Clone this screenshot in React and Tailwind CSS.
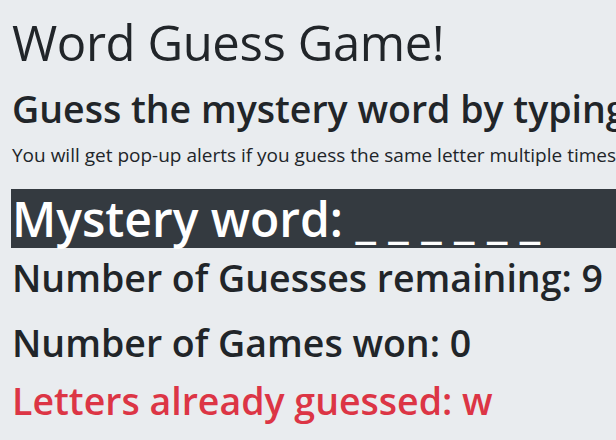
export default function App() {
  return (
    <div className="h-[440px] w-[616px] overflow-hidden bg-[#e9ecef] px-3 text-[#212529] font-['Open_Sans',sans-serif]">
      <div className="h-[85px] whitespace-nowrap text-[49px] font-normal leading-[85px] tracking-[-0.4px]">Word Guess Game!</div>
      <div className="h-[47px] whitespace-nowrap text-[37.5px] font-semibold leading-[47px]">Guess the mystery word by typing a letter!</div>
      <div className="h-[47px] whitespace-nowrap text-[19px] font-normal leading-[47px]">You will get pop-up alerts if you guess the same letter multiple times</div>
      <div className="mt-[10px] -ml-px -mr-3 h-[59px] whitespace-nowrap bg-[#343a40] pl-px text-[48px] font-semibold leading-[59px] text-white">Mystery word: _ _ _ _ _ _</div>
      <div className="h-[59px] whitespace-nowrap text-[37.5px] font-semibold leading-[59px]">Number of Guesses remaining: 9</div>
      <div className="h-[71px] whitespace-nowrap text-[37.5px] font-semibold leading-[71px]">Number of Games won: 0</div>
      <div className="h-[45px] whitespace-nowrap text-[37.5px] font-semibold leading-[45px] text-[#dc3545]">Letters already guessed: w</div>
    </div>
  );
}
